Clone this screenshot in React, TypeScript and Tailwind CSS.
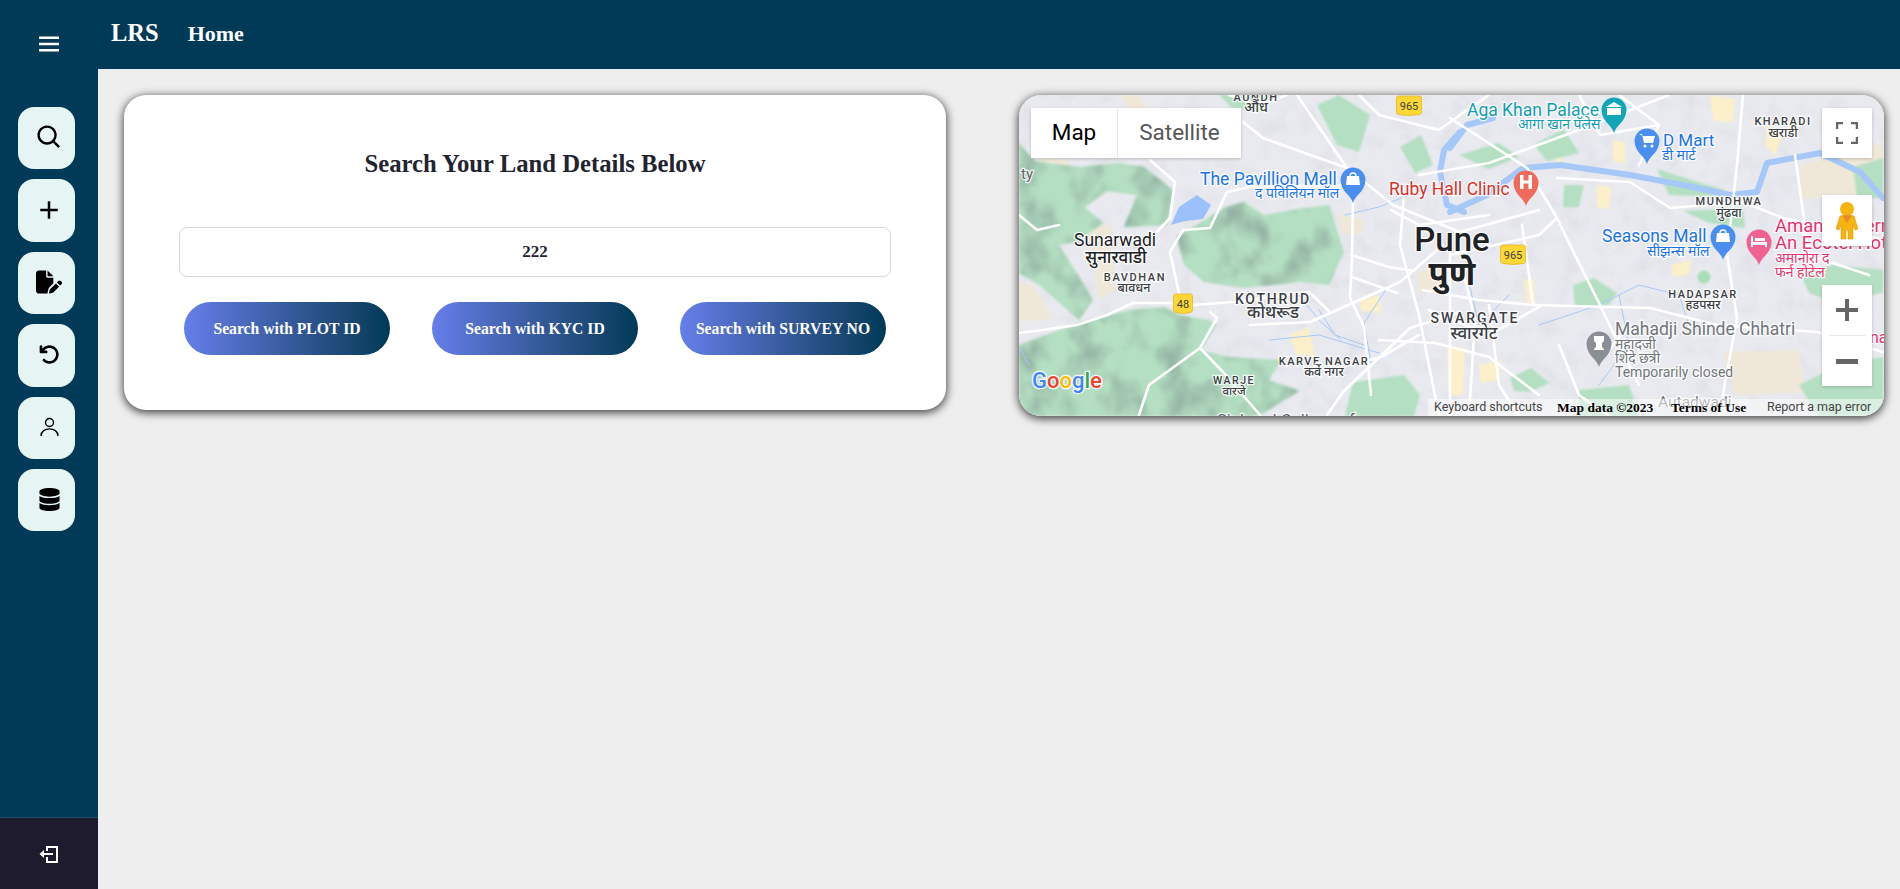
import type { ReactNode } from "react";
import { BiSearch, BiPlus, BiMenu } from "react-icons/bi";
import { FaDatabase } from "react-icons/fa";
import { FaFilePen, FaArrowRotateLeft } from "react-icons/fa6";

const serif = "font-['Liberation_Serif',serif]";

const sideIcons: ReactNode[] = [
    <BiSearch size={29} />,
    <BiPlus size={30} />,
    <FaFilePen size={26} />,
    <FaArrowRotateLeft size={21} />,
    <svg width="19" height="20" viewBox="0 0 19 20" fill="none" stroke="currentColor" strokeWidth="1.4">
        <circle cx="9.5" cy="5.5" r="4" />
        <path d="M1 19 C1 9.5 18 9.5 18 19" />
    </svg>,
    <FaDatabase size={23} />,
];

const greens = [
    "M0 48 L15 66 L60 72 L100 68 L125 72 L154 95 L148 130 L105 132 L118 100 L88 96 L66 112 L84 128 L60 146 L40 150 L56 175 L74 205 L60 225 L20 190 L0 178 Z",
    "M0 250 L60 228 L110 215 L145 212 L160 220 L190 225 L198 230 L182 255 L210 262 L262 265 L250 285 L280 296 L240 321 L0 321 Z",
    "M158 142 L205 113 L225 107 L245 120 L285 113 L310 110 L325 157 L310 190 L280 187 L225 193 L185 187 L165 170 Z",
    "M334 287 L385 280 L401 300 L395 321 L326 321 Z",
    "M298 10 L320 0 L351 20 L340 57 L318 50 Z",
    "M381 52 L402 40 L414 70 L396 78 Z",
    "M545 90 L565 90 L560 112 L544 112 Z",
    "M554 190 L575 183 L598 198 L590 210 L556 212 Z",
    "M491 283 L512 273 L531 288 L510 297 L495 296 Z",
    "M664 116 L724 113 L726 133 L690 128 Z",
    "M781 178 L815 170 L864 175 L864 197 L820 210 L790 198 Z",
    "M834 72 L864 63 L864 103 L838 103 Z",
    "M638 74 L708 96 L700 102 L650 100 Z",
    "M515 50 L545 34 L560 58 L528 66 Z",
    "M440 60 L480 48 L500 62 L470 74 Z",
    "M200 0 L260 0 L240 16 L212 12 Z",
    "M780 290 L820 270 L864 262 L864 321 L800 321 Z",
    "M560 295 L610 290 L620 321 L560 321 Z",
];

const tans = [
    "M18 63 L48 64 L56 86 L30 90 Z",
    "M68 133 L92 130 L96 195 L80 205 Z",
    "M0 187 L14 190 L34 224 L0 226 Z",
    "M781 70 L864 48 L864 100 L780 104 Z",
    "M704 257 L780 255 L785 297 L716 300 Z",
    "M398 177 L426 172 L426 197 L400 198 Z",
    "M100 0 L118 0 L130 14 L112 16 Z",
    "M320 120 L345 125 L342 140 L322 138 Z",
];

const yellows = [
    "M578 90 L592 92 L590 114 L578 112 Z",
    "M594 45 L606 48 L606 68 L594 66 Z",
    "M691 0 L716 4 L714 27 L694 26 Z",
    "M537 44 L545 50 L541 70 L531 60 Z",
    "M505 185 L516 185 L516 210 L508 210 Z",
    "M340 205 L360 200 L362 218 L342 216 Z",
    "M428 252 L446 252 L444 300 L430 300 Z",
    "M270 240 L290 232 L296 262 L278 260 Z",
    "M748 30 L764 40 L756 60 L746 50 Z",
    "M460 270 L482 265 L480 285 L462 288 Z",
    "M652 170 L672 165 L670 180 L654 182 Z",
];

const roads = [
    "0,238 24,235 58,230 88,220 114,208 151,208 174,210 214,207 290,197 310,216",
    "161,203 151,157 164,135 191,133 208,97 231,92 325,90 334,80",
    "131,65 156,87 151,123 138,137",
    "278,0 328,73 374,110 441,137 520,115",
    "224,27 244,43 328,73",
    "334,103 333,163 331,203 345,232 352,300",
    "231,230 291,227 381,187 424,150",
    "191,217 198,223 181,253 204,277 241,320",
    "441,217 391,233 324,297 308,320",
    "431,23 508,73 538,123 551,150 581,210 600,250 620,290",
    "538,83 611,87 651,113 724,107 764,123 865,145",
    "514,210 631,213 698,230 798,237 864,257",
    "724,0 718,70 708,160 718,223 700,321",
    "385,100 381,150 400,220 420,321",
    "340,0 360,20 420,35 441,20 470,0",
    "431,160 476,150 520,140 538,123",
    "560,0 581,40 640,30 600,0",
    "210,0 240,10 268,0",
    "400,80 470,68 560,35 650,0",
    "470,210 480,290 500,321",
    "431,140 431,321",
    "540,250 560,300 590,321",
    "120,320 130,290 181,253",
    "620,70 640,30",
    "776,60 790,160 850,180",
    "372,115 400,130 470,120",
    "332,160 370,172 395,176",
    "333,182 378,198",
    "404,195 460,205 514,210",
    "410,215 470,240 520,212",
    "416,248 470,262 520,300",
    "360,245 416,248",
    "445,180 456,225 450,321",
    "503,130 510,180 514,210",
    "610,230 590,255",
    "0,120 18,135 40,130",
    "330,270 362,262 400,240",
];

const rivers = [
    "431,117 468,100 504,73 541,70 611,80 664,90 711,100 738,97 748,68 801,58 841,77 864,103",
    "441,37 425,55 421,77 428,110 445,117",
    "431,53 448,30 474,23",
];

const streams = [
    "326,120 360,112 390,100",
    "300,215 316,240 345,250",
    "250,245 300,240 360,258",
    "448,180 460,230 490,200",
    "520,230 580,210 620,190 660,200 670,230",
    "600,200 610,250 580,290",
    "280,200 300,225 322,245",
    "370,190 345,228 352,268",
    "0,252 10,270",
];

const labels: [string, number, number, number, string][] = [
    ["The Pavillion Mall", 181, 90, 17.5, "#1a73e8"],
    ["Sunarwadi", 55, 151, 17.5, "#202124"],
    ["Aga Khan Palace", 448, 21, 17.5, "#129eaf"],
    ["D Mart", 644, 51, 17, "#1a73e8"],
    ["Ruby Hall Clinic", 370, 100, 17.5, "#d93025"],
    ["Seasons Mall", 583, 147, 17.5, "#1a73e8"],
    ["Amanora Fern", 756, 137, 18.5, "#e8336f"],
    ["An Ecotel Hotel", 756, 154, 18.5, "#e8336f"],
    ["na", 851, 248, 16, "#e8336f"],
    ["Mahadji Shinde Chhatri", 596, 240, 17.5, "#70757a"],
    ["Temporarily closed", 596, 282, 14, "#70757a"],
    ["Autadwadi", 639, 312, 15.5, "#70757a"],
    ["Sinhgad College of", 198, 331, 16.5, "#5f6368"],
];

const areaLabels: [string, number, number, number, number][] = [
    ["AUNDH", 237, 6, 11, 1.6],
    ["BAVDHAN", 116, 186, 11, 1.6],
    ["KOTHRUD", 254, 209, 14, 1.8],
    ["KARVE NAGAR", 305, 270, 11, 1.5],
    ["WARJE", 215, 289, 10.5, 1.5],
    ["SWARGATE", 456, 228, 14, 2],
    ["KHARADI", 764, 30, 11, 1.5],
    ["MUNDHWA", 710, 110, 11, 1.5],
    ["HADAPSAR", 684, 203, 11, 1.5],
];

const hindi: [string, number, number, number, string][] = [
    ["औंध", 237, 17, 14, "#3c4043"],
    ["सुनारवाडी", 97, 168, 17, "#202124"],
    ["बावधन", 115, 197, 12.5, "#3c4043"],
    ["कोथरूड", 254, 223, 17, "#3c4043"],
    ["कर्वे नगर", 305, 281, 12.5, "#3c4043"],
    ["वारजे", 215, 300, 11.5, "#3c4043"],
    ["स्वारगेट", 455, 244, 17, "#3c4043"],
    ["खराडी", 764, 42, 12.5, "#3c4043"],
    ["मुंढवा", 710, 122, 12.5, "#3c4043"],
    ["हडपसर", 684, 214, 12.5, "#3c4043"],
];

const hindiLeft: [string, number, number, number, string][] = [
    ["द पविलियन मॉल", 236, 103, 14, "#1a73e8"],
    ["आगा खान पॅलेस", 499, 34, 14, "#129eaf"],
    ["डी मार्ट", 643, 65, 14, "#1a73e8"],
    ["सीझन्स मॉल", 628, 161, 14, "#1a73e8"],
    ["अमानोरा द", 756, 168, 14, "#e8336f"],
    ["फर्न होटेल", 756, 182, 14, "#e8336f"],
    ["महादजी", 596, 254, 14, "#70757a"],
    ["शिंदे छत्री", 596, 268, 14, "#70757a"],
];

function Line({ d, color, width }: { d: string; color: string; width: number }) {
    return <polyline points={d} fill="none" stroke={color} strokeWidth={width} strokeLinejoin="round" strokeLinecap="round" />;
}

function Shield({ x, y, text }: { x: number; y: number; text: string }) {
    const w = text.length > 2 ? 25 : 19;
    return (
        <g>
            <path d={`M${x - w / 2} ${y - 9} q0 -2 2 -2 h${w - 4} q2 0 2 2 v14 q0 2 -2 2.5 q-${(w - 4) / 2} 2 -${w - 4} 0 q-2 -.5 -2 -2.5 Z`} fill="#fdd835" stroke="#e0b020" strokeWidth="0.7" />
            <text x={x} y={y + 3} textAnchor="middle" fontSize="11" fill="#3c4043" fontFamily="Roboto, sans-serif">{text}</text>
        </g>
    );
}

function Pin({ x, y, color, children }: { x: number; y: number; color: string; children?: ReactNode }) {
    // x, y is the tip of the pin
    return (
        <g transform={`translate(${x} ${y})`}>
            <path d="M0 0 C-2 -8 -12 -11 -12.5 -23 A12.5 12.5 0 1 1 12.5 -23 C12 -11 2 -8 0 0 Z" fill={color} />
            <g transform="translate(0 -24)" fill="#fff" stroke="none">{children}</g>
        </g>
    );
}

function MapTiles() {
    const halo = "[paint-order:stroke] stroke-white/80 [stroke-width:2.5px]";
    return (
        <svg viewBox="0 0 865 321" className="absolute inset-0 w-full h-full font-['Roboto','Noto_Sans',sans-serif]">
            <defs>
                <filter id="soft"><feGaussianBlur stdDeviation="1" /></filter>
                <filter id="tiny"><feGaussianBlur stdDeviation="0.35" /></filter>
                <filter id="mottle" x="0" y="0" width="100%" height="100%">
                    <feTurbulence type="fractalNoise" baseFrequency="0.035 0.028" numOctaves="3" seed="7" />
                    <feColorMatrix values="0 0 0 0 0.28  0 0 0 0 0.42  0 0 0 0 0.35  2.4 0 0 0 -1.05" />
                    <feComposite in2="SourceGraphic" operator="in" />
                    <feGaussianBlur stdDeviation="1.5" />
                </filter>
                <filter id="paper" x="0" y="0" width="100%" height="100%">
                    <feTurbulence type="fractalNoise" baseFrequency="0.05" numOctaves="3" seed="3" />
                    <feColorMatrix values="0 0 0 0 0.6  0 0 0 0 0.6  0 0 0 0 0.64  0.7 0 0 0 -0.33" />
                </filter>
            </defs>
            <rect width="865" height="321" fill="#e9eaef" />
            <rect width="865" height="321" filter="url(#paper)" />
            <g filter="url(#soft)">
                {tans.map((d) => <path key={d} d={d} fill="#efe8d8" />)}
                {yellows.map((d) => <path key={d} d={d} fill="#fbf0c9" />)}
                {greens.map((d) => <path key={d} d={d} fill="#b4dfc2" />)}
                <circle cx="685" cy="182" r="6.5" fill="#a9dcb8" />
            </g>
            <g filter="url(#mottle)">
                {greens.slice(0, 3).map((d) => <path key={d} d={d} fill="#000" />)}
            </g>
            <g filter="url(#tiny)">
                {rivers.map((d) => <Line key={d} d={d} color="#a6c8f8" width={6} />)}
                <path d="M152 130 L160 112 L178 100 L192 110 L184 124 L166 126 Z" fill="#9cc0f9" />
                {streams.map((d) => <Line key={d} d={d} color="#a6c8f8" width={1} />)}
                {roads.map((d) => <Line key={d} d={d} color="#ffffff" width={2.6} />)}
            </g>

            {labels.map(([t, x, y, s, c]) => (
                <text key={t} x={x} y={y} fontSize={s} fill={c} className={halo}>{t}</text>
            ))}
            {areaLabels.map(([t, x, y, s, ls]) => (
                <text key={t} x={x} y={y} fontSize={s} fontWeight="500" letterSpacing={ls} textAnchor="middle" fill="#3c4043" className={halo}>{t}</text>
            ))}
            {hindi.map(([t, x, y, s, c]) => (
                <text key={t} x={x} y={y} fontSize={s} fontWeight="500" textAnchor="middle" fill={c} className={halo}>{t}</text>
            ))}
            {hindiLeft.map(([t, x, y, s, c]) => (
                <text key={t} x={x} y={y} fontSize={s} fill={c} className={halo}>{t}</text>
            ))}
            <text x="2" y="84" fontSize="15" fill="#5f6368" className={halo}>ty</text>
            <text x="433" y="156" fontSize="33" fontWeight="500" textAnchor="middle" fill="#202124" className={halo}>Pune</text>
            <text x="433" y="190" fontSize="33" fontWeight="700" textAnchor="middle" fill="#202124" className={halo}>पुणे</text>

            <Shield x={390} y={12} text="965" />
            <Shield x={494} y={161} text="965" />
            <Shield x={164} y={210} text="48" />

            <Pin x={334} y={108} color="#4a8ff0">
                <path d="M-6 -3 H6 L7 6 H-7 Z" />
                <path d="M-3 -3 A3 3 0 0 1 3 -3" fill="none" stroke="#fff" strokeWidth="1.3" />
            </Pin>
            <Pin x={595} y={38} color="#12a5b8">
                <path d="M0 -7 L8 -2 H-8 Z M-7 -1 H7 V6 H-7 Z" />
            </Pin>
            <Pin x={628} y={69} color="#4a8ff0">
                <path d="M-8 -6 H-5 L-3 3 H6 L8 -4 H-4 Z" />
                <circle cx="-2" cy="6" r="1.5" />
                <circle cx="5" cy="6" r="1.5" />
            </Pin>
            <Pin x={507} y={111} color="#ef6a5b">
                <path d="M-6 -7 H-2.5 V-1.5 H2.5 V-7 H6 V7 H2.5 V1.5 H-2.5 V7 H-6 Z" />
            </Pin>
            <Pin x={704} y={165} color="#4a8ff0">
                <path d="M-6 -3 H6 L7 6 H-7 Z" />
                <path d="M-3 -3 A3 3 0 0 1 3 -3" fill="none" stroke="#fff" strokeWidth="1.3" />
            </Pin>
            <Pin x={740} y={170} color="#f06292">
                <path d="M-8 -5 H-6 V1 H8 V6 H6 V4 H-6 V6 H-8 Z M-4 -3 H6 V0 H-4 Z" />
            </Pin>
            <Pin x={580} y={272} color="#8a8f96">
                <path d="M-5 -7 H5 V-2 L3 0 V4 L5 6 V7 H-5 V6 L-3 4 V0 L-5 -2 Z" />
            </Pin>

            <text x="13" y="293" fontSize="22" fontWeight="500" className="[paint-order:stroke] stroke-white/90 [stroke-width:2.5px]">
                <tspan fill="#4285f4">G</tspan>
                <tspan fill="#ea4335">o</tspan>
                <tspan fill="#fbbc05">o</tspan>
                <tspan fill="#4285f4">g</tspan>
                <tspan fill="#34a853">l</tspan>
                <tspan fill="#ea4335">e</tspan>
            </text>
        </svg>
    );
}

function MapCard() {
    return (
        <div className="relative ml-[73px] w-[865px] h-[321px] rounded-[22px] overflow-hidden shadow-[0_2px_8px_1px_rgba(0,0,0,0.7)] font-['Roboto',sans-serif]">
            <MapTiles />
            <div className="absolute left-3 top-[13px] flex h-[50px] bg-white shadow-[0_1px_3px_rgba(0,0,0,0.2)] text-[22.5px]">
                <div className="w-[87px] flex items-center justify-center text-black border-r border-gray-200">Map</div>
                <div className="w-[123px] flex items-center justify-center text-[#565656]">Satellite</div>
            </div>
            <div className="absolute right-3 top-[13px] w-[50px] h-[50px] bg-white flex items-center justify-center shadow-[0_1px_3px_rgba(0,0,0,0.2)]">
                <svg width="22" height="22" viewBox="0 0 22 22" fill="none" stroke="#666" strokeWidth="2.5">
                    <path d="M1 7V1H7M15 1H21V7M21 15V21H15M7 21H1V15" />
                </svg>
            </div>
            <div className="absolute right-3 top-[100px] w-[50px] h-[51px] bg-white flex items-center justify-center shadow-[0_1px_3px_rgba(0,0,0,0.2)]">
                <svg width="22" height="38" viewBox="0 0 22 38">
                    <circle cx="11" cy="7" r="7" fill="#f6b40e" />
                    <path d="M4 14 Q11 12 18 14 L22 27 L19 28 L17 23 V37 H12 V28 H10 V37 H5 V23 L3 28 L0 27 Z" fill="#f6b40e" stroke="#d98c05" strokeWidth="0.5" />
                    <path d="M6 13.5 H16 L11 21 Z" fill="#e98a24" />
                </svg>
            </div>
            <div className="absolute right-3 top-[190px] w-[50px] h-[101px] bg-white flex flex-col items-center shadow-[0_1px_3px_rgba(0,0,0,0.2)]">
                <div className="h-[50px] flex items-center">
                    <svg width="22" height="22" viewBox="0 0 22 22" fill="#666"><path d="M9 0H13V9H22V13H13V22H9V13H0V9H9Z" /></svg>
                </div>
                <div className="w-[37px] h-px bg-gray-200" />
                <div className="h-[50px] flex items-center">
                    <svg width="22" height="5" viewBox="0 0 22 5" fill="#666"><path d="M0 0H22V5H0Z" /></svg>
                </div>
            </div>
            <div className="absolute right-0 bottom-0 h-[17px] w-[456px] bg-white/50 flex items-center text-[12.5px] leading-none text-[#444] whitespace-nowrap">
                <span className="ml-[6px] w-[123px]">Keyboard shortcuts</span>
                <span className={`${serif} font-bold text-[13.5px] text-black w-[114px]`}>Map data ©2023</span>
                <span className={`${serif} font-bold text-[13.5px] text-black w-[96px]`}>Terms of Use</span>
                <span>Report a map error</span>
            </div>
        </div>
    );
}

function SearchCard() {
    const buttons = ["Search with PLOT ID", "Search with KYC ID", "Search with SURVEY NO"];
    return (
        <div className={`w-[822px] h-[315px] bg-white rounded-[22px] shadow-[0_2px_8px_1px_rgba(0,0,0,0.7)] px-[55px] pt-[53px] ${serif}`}>
            <h2 className="text-center text-[24.7px] leading-[32px] font-bold text-[#1f2430]">Search Your Land Details Below</h2>
            <div className="mt-[47px] h-[50px] rounded-lg border border-gray-300 flex items-center justify-center text-[17px] font-bold text-[#1f2430]">222</div>
            <div className="mt-[25px] px-[5px] flex justify-between">
                {buttons.map((b) => (
                    <button key={b} className="w-[206px] h-[53px] rounded-full bg-linear-to-r from-[#667eea] to-[#003a57] text-white text-[15.7px] font-bold">
                        {b}
                    </button>
                ))}
            </div>
        </div>
    );
}

function App() {
    return (
        <div className={`flex h-screen bg-[#eeeeee] ${serif}`}>
            <aside className="w-[98px] shrink-0 bg-[#003a57] flex flex-col">
                <div className="h-[107px] pb-[20px] flex items-center justify-center text-white">
                    <BiMenu size={30} />
                </div>
                <div className="flex flex-col gap-[10px] pl-[18px]">
                    {sideIcons.map((icon, i) => (
                        <div key={i} className="w-[57px] h-[62.4px] pl-[5px] pb-[2px] rounded-[16px] bg-[#e6f5f3] flex items-center justify-center text-black">
                            {icon}
                        </div>
                    ))}
                </div>
                <div className="mt-auto h-[72px] bg-[#1e1b2e] border-t border-[#1d5068] flex items-center justify-center">
                    <svg width="20" height="18" viewBox="0 0 20 18" fill="none" stroke="#fff" strokeWidth="2">
                        <path d="M8 6V2H18V17H8V12" />
                        <path d="M14 9H4" />
                        <path d="M0.5 9L5 5V13Z" fill="#fff" stroke="none" />
                    </svg>
                </div>
            </aside>
            <main className="flex-1 min-w-0 flex flex-col">
                <header className="h-[69px] shrink-0 bg-[#003a57] flex items-center text-white font-bold pb-[2px]">
                    <span className="ml-[13px] text-[24.5px]">LRS</span>
                    <span className="ml-[29px] text-[22px]">Home</span>
                </header>
                <div className="flex items-start pl-[26px] pt-[26px]">
                    <SearchCard />
                    <MapCard />
                </div>
            </main>
        </div>
    );
}

export default App;
